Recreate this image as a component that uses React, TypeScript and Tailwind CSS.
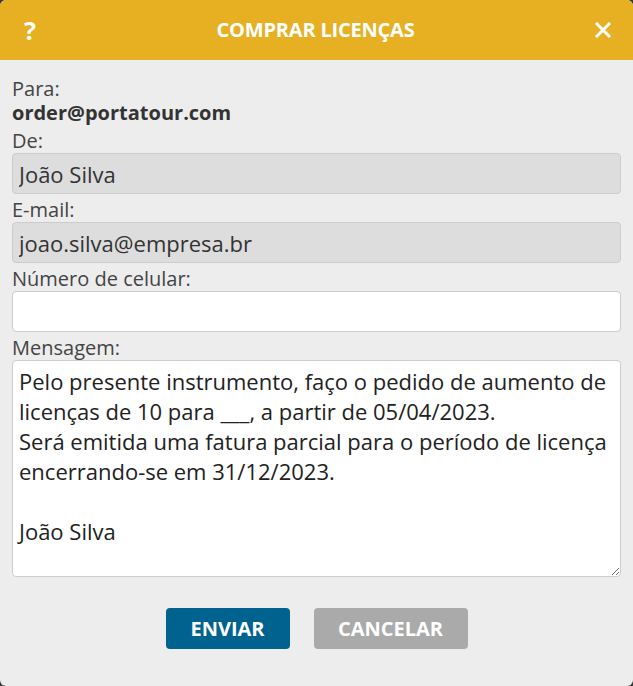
import { useState } from 'react';

const message =
  'Pelo presente instrumento, faço o pedido de aumento de licenças de 10 para ___, a partir de 05/04/2023.\nSerá emitida uma fatura parcial para o período de licença encerrando-se em 31/12/2023.\n\nJoão Silva';

export default function App() {
  const [phone, setPhone] = useState('');
  const [text, setText] = useState(message);

  return (
    <div className="h-[686px] w-[633px] bg-[#3a3a3a] font-['Open_Sans',sans-serif]">
      <div className="flex h-full flex-col overflow-hidden rounded-[6px] bg-[#ededed]">
        {/* Header */}
        <div className="flex h-[60px] shrink-0 items-center justify-between bg-[#e6b022] pl-[23px] pr-[21px] text-white">
          <button className="w-[14px] text-[25px] font-bold leading-none">?</button>
          <h1 className="text-[20px] font-bold tracking-[-0.2px]">COMPRAR LICENÇAS</h1>
          <button className="flex w-[18px] justify-center">
            <svg width="16" height="16" viewBox="0 0 16 16">
              <path d="M2 2L14 14M14 2L2 14" stroke="white" strokeWidth="3" strokeLinecap="square" />
            </svg>
          </button>
        </div>

        {/* Body */}
        <div className="flex flex-1 flex-col px-3 pt-4 text-[20px] leading-[25px] text-[#444]">
          <label className="mt-px leading-[24px]">Para:</label>
          <div className="mb-[3px] font-bold leading-[24px] text-[#333]">order@portatour.com</div>

          <label>De:</label>
          <input
            readOnly
            value="João Silva"
            className="mb-[3px] h-[41px] w-full rounded-[4px] border border-[#cccccc] bg-[#dddddd] px-[6px] text-[22px] text-[#333] outline-none"
          />

          <label>E-mail:</label>
          <input
            readOnly
            value="joao.silva@empresa.br"
            className="mb-[3px] h-[41px] w-full rounded-[4px] border border-[#cccccc] bg-[#dddddd] px-[6px] text-[22px] text-[#333] outline-none"
          />

          <label>Número de celular:</label>
          <input
            value={phone}
            onChange={(e) => setPhone(e.target.value)}
            className="mb-[3px] h-[41px] w-full rounded-[4px] border border-[#cccccc] bg-white px-[6px] text-[22px] text-[#333] outline-none"
          />

          <label>Mensagem:</label>
          <textarea
            value={text}
            onChange={(e) => setText(e.target.value)}
            className="h-[217px] w-full resize-y rounded-[4px] border border-[#cccccc] bg-white pl-[6px] pr-[2px] pt-[5px] text-[22px] leading-[30px] text-[#222] outline-none"
          />

          <div className="mt-[31px] flex justify-center gap-6">
            <button className="h-[41px] w-[124px] rounded-[4px] bg-[#00628f] text-[20px] font-bold text-white">
              ENVIAR
            </button>
            <button className="h-[41px] w-[154px] rounded-[4px] bg-[#aaaaaa] text-[20px] font-bold text-white">
              CANCELAR
            </button>
          </div>
        </div>
      </div>
    </div>
  );
}
